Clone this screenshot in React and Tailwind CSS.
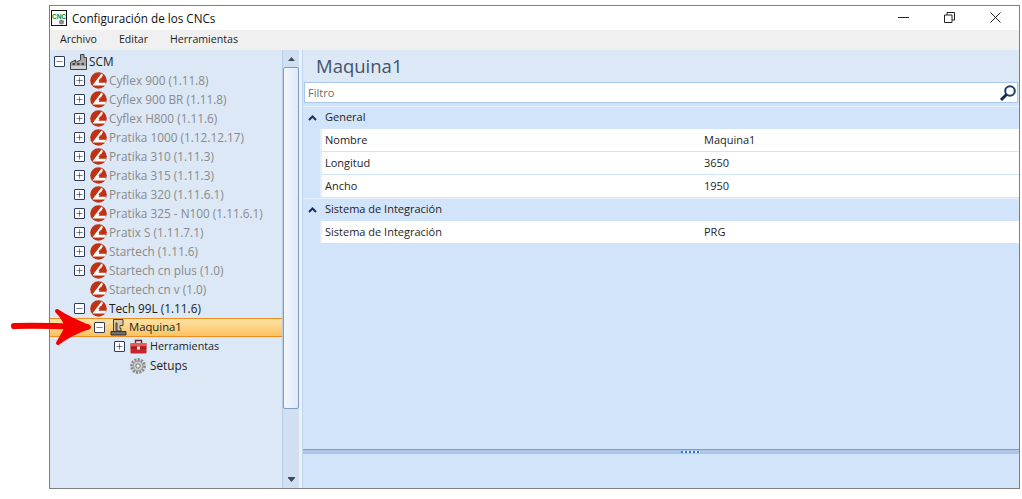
import { Minus, Plus } from "lucide-react";

const machines = [
  { name: "Cyflex 900 (1.11.8)" },
  { name: "Cyflex 900 BR (1.11.8)" },
  { name: "Cyflex H800 (1.11.6)" },
  { name: "Pratika 1000 (1.12.12.17)" },
  { name: "Pratika 310 (1.11.3)" },
  { name: "Pratika 315 (1.11.3)" },
  { name: "Pratika 320 (1.11.6.1)" },
  { name: "Pratika 325 - N100 (1.11.6.1)" },
  { name: "Pratix S (1.11.7.1)" },
  { name: "Startech (1.11.6)" },
  { name: "Startech cn plus (1.0)" },
  { name: "Startech cn v (1.0)", noToggle: true },
];

const Toggle = ({ open }) => (
  <span className="w-[11px] h-[11px] shrink-0 border border-[#2f3d5c] bg-white flex items-center justify-center rounded-[1px]">
    {open ? <Minus size={9} strokeWidth={1.6} color="#1f2a44" /> : <Plus size={9} strokeWidth={1.6} color="#1f2a44" />}
  </span>
);

const BrandIcon = () => (
  <svg width="17" height="17" viewBox="0 0 17 17" className="shrink-0">
    <circle cx="8.5" cy="8.5" r="8.3" fill="#bf3214" />
    <path d="M11.5 1.500 L3.500 12 L2.500 13.500 L15.500 13.500 L15.800 10.800 L8.500 10.800 L13 3 Z" fill="#fff" />
    <path d="M8.500 9 L10.500 5.500 L11 9 Z" fill="#bf3214" />
  </svg>
);

const FactoryIcon = () => (
  <svg width="17" height="16" viewBox="0 0 17 16" className="shrink-0">
    <path d="M.5 15.500V8.500l5-2.500v2.500l5-2.500V.5h3.500v3h2.500v12z" fill="#a8a8a8" stroke="#3f3f3f" />
    <path d="M1 15h15v-3H1z" fill="#d0d0d0" />
    <path d="M2.500 10h2.500M7 10h2.500M11.500 10h2.500" stroke="#222" strokeWidth="1.500" />
  </svg>
);

const MachineIcon = () => (
  <svg width="17" height="17" viewBox="0 0 17 17" className="shrink-0">
    <path d="M3.500.5h9.500v6h-3v3h1v2.500H7V4H6v8.500H3.500z" fill="#d9c9a3" stroke="#3f3f3f" />
    <path d="M1 16h15v-3.500H1z" fill="#6e6e6e" stroke="#333" />
  </svg>
);

const ToolboxIcon = () => (
  <svg width="17" height="15" viewBox="0 0 17 15" className="shrink-0">
    <path d="M5.500 4V1.500h6V4" fill="none" stroke="#7a2020" strokeWidth="1.400" />
    <rect x="0.500" y="4" width="16" height="10.500" rx="1" fill="#c8242c" />
    <rect x="0.500" y="4" width="16" height="3" fill="#e85a5a" />
    <rect x="0.500" y="8.500" width="16" height="1" fill="#8c1a20" />
    <rect x="7" y="7.500" width="3" height="3" fill="#eee" />
  </svg>
);

const GearIcon = () => (
  <svg width="16" height="16" viewBox="0 0 16 16" className="shrink-0">
    <circle cx="8" cy="8" r="6.600" fill="none" stroke="#8b8b8b" strokeWidth="2.600" strokeDasharray="2.200 1.200" />
    <circle cx="8" cy="8" r="5" fill="#cfcfcf" stroke="#8b8b8b" />
    <circle cx="8" cy="8" r="2.200" fill="#eee" stroke="#777" />
  </svg>
);

const AppIcon = () => (
  <svg width="16" height="16" viewBox="0 0 16 16" className="shrink-0">
    <rect x="0.500" y="0.500" width="15" height="15" fill="#fff" stroke="#111" />
    <text x="8" y="8.500" textAnchor="middle" fontSize="6.500" fontWeight="700" fill="#0a8a2a" fontFamily="Liberation Sans, sans-serif">CNC</text>
    <circle cx="10.500" cy="12" r="2.500" fill="#8a8a8a" />
  </svg>
);

const Row = ({ indent, children, selected }) => (
  <div
    className={`h-[19px] flex items-center whitespace-nowrap ${indent} ${
      selected ? "bg-gradient-to-b from-[#fee3a5] to-[#fbc25e] border-y border-[#f08c1e]" : ""
    }`}
  >
    {children}
  </div>
);

const Section = ({ title, rows, className }) => (
  <div className={className}>
    <div className="h-[22px] flex items-center bg-[#d2e4fa] border-t border-[#e8f1fd]">
      <svg width="9" height="6" viewBox="0 0 9 6" className="ml-[5px] mr-[8px]">
        <path d="M1 5l3.500-3.500L8 5" fill="none" stroke="#16305f" strokeWidth="2" />
      </svg>
      <span>{title}</span>
    </div>
    <div className="pl-[17px]">
      {rows.map(([label, value]) => (
        <div key={label} className="h-[23px] flex items-center bg-white border-t border-[#d2e4fa] border-l-2 border-l-[#e4eefb]">
          <span className="w-[382px] pl-[3px] shrink-0">{label}</span>
          <span>{value}</span>
        </div>
      ))}
    </div>
  </div>
);

export default function App() {
  return (
    <div className="relative w-[1022px] h-[499px] bg-white text-[11.800px] text-[#1e1e1e] font-['Open_Sans',sans-serif] pt-[5px] pl-[49px] overflow-hidden">
      <div className="w-[971px] h-[484px] border border-[#7f7f7f] flex flex-col">
        {/* Title bar */}
        <div className="h-[24px] flex items-center bg-white pl-[1px]">
          <AppIcon />
          <span className="ml-[5px] mt-[2px] text-[11.700px] text-[#111]">Configuración de los CNCs</span>
          <div className="ml-auto mb-[2px] flex items-center gap-[35px] pr-[18px]">
            <svg width="11" height="11" viewBox="0 0 11 11"><path d="M0 5.500h11" stroke="#222" /></svg>
            <svg width="11" height="11" viewBox="0 0 11 11"><path d="M.5 3h7.500v7.500H.5zM3 3V.5h7.500V8H8" fill="none" stroke="#222" /></svg>
            <svg width="11" height="11" viewBox="0 0 11 11"><path d="M.5.5l10 10M10.500.5l-10 10" stroke="#222" /></svg>
          </div>
        </div>

        {/* Menu */}
        <div className="h-[20px] bg-[#f0f0f0] flex items-center gap-[22px] pl-[10px] text-[10.600px]">
          <span>Archivo</span>
          <span>Editar</span>
          <span>Herramientas</span>
        </div>

        <div className="flex-1 flex min-h-0 bg-[#f0f0f0]">
          {/* Tree */}
          <div className="w-[232px] bg-[#dce8f6] pt-[2px]">
            <Row indent="pl-[4px]">
              <Toggle open />
              <span className="ml-[5px]"><FactoryIcon /></span>
              <span className="ml-[2px]">SCM</span>
            </Row>
            {machines.map((m) => (
              <Row key={m.name} indent="pl-[24px]">
                {m.noToggle ? <span className="w-[11px]" /> : <Toggle />}
                <span className="ml-[5px]"><BrandIcon /></span>
                <span className="ml-[2px] text-[#8a8a8a]">{m.name}</span>
              </Row>
            ))}
            <Row indent="pl-[24px]">
              <Toggle open />
              <span className="ml-[5px]"><BrandIcon /></span>
              <span className="ml-[2px]">Tech 99L (1.11.6)</span>
            </Row>
            <Row indent="pl-[44px]" selected>
              <Toggle open />
              <span className="ml-[5px]"><MachineIcon /></span>
              <span className="ml-[2px] text-[11.300px]">Maquina1</span>
            </Row>
            <Row indent="pl-[64px]">
              <Toggle />
              <span className="ml-[5px]"><ToolboxIcon /></span>
              <span className="ml-[3px] text-[10.800px]">Herramientas</span>
            </Row>
            <Row indent="pl-[80px]">
              <GearIcon />
              <span className="ml-[4px]">Setups</span>
            </Row>
          </div>

          {/* Scrollbar */}
          <div className="w-[17px] bg-[#d0dff3] border-l border-[#b9cce6] flex flex-col items-center">
            <div className="h-[17px] flex items-center justify-center">
              <svg width="7" height="4" viewBox="0 0 7 4"><path d="M3.500 0L7 4H0z" fill="#3f4a5e" /></svg>
            </div>
            <div className="w-[16px] h-[342px] border border-[#7f9cc7] rounded-[2px] bg-gradient-to-r from-[#f2f7fd] to-[#dfe9f7]" />
            <div className="mt-auto h-[17px] flex items-center justify-center">
              <svg width="7" height="5" viewBox="0 0 7 5"><path d="M0 0h7v1L3.500 5 0 1z" fill="#3f4a5e" /></svg>
            </div>
          </div>

          {/* Detail pane */}
          <div className="ml-[3px] flex-1 min-w-0 flex flex-col bg-[#d2e4fa] border-l border-[#bcd6f7] text-[11px]">
            <div className="h-[32px] bg-[#dce8f6] flex items-center pl-[13px] text-[18.500px] text-[#44546a]">Maquina1</div>
            <div className="h-[21px] mx-[1px] bg-white border border-[#a9c8ee] flex items-center pl-[3px] text-[#6d6d6d]">
              <span className="pt-[1px]">Filtro</span>
              <svg width="18" height="18" viewBox="0 0 18 18" className="ml-auto">
                <circle cx="11" cy="7" r="4.800" fill="none" stroke="#1c3c66" strokeWidth="2" />
                <path d="M7.500 10.500L2 16" stroke="#14294a" strokeWidth="3" />
              </svg>
            </div>
            <div className="mt-[3px]">
              <Section title="General" rows={[["Nombre", "Maquina1"], ["Longitud", "3650"], ["Ancho", "1950"]]} />
              <Section className="mt-[1px]" title="Sistema de Integración" rows={[["Sistema de Integración", "PRG"]]} />
            </div>
            <div className="mt-auto mb-[34px] h-[5px] bg-[#adc6e8] border-t border-[#7a9cc8] flex items-center pl-[378px]">
              <span className="w-[19px] h-[2px] bg-[repeating-linear-gradient(90deg,#2f73d0_0,#2f73d0_2px,#e8f1fd_2px,#e8f1fd_4px)]" />
            </div>
          </div>
        </div>
      </div>

      {/* Annotation arrow */}
      <svg width="90" height="44" viewBox="0 0 90 44" className="absolute left-[5px] top-[305px]">
        <path d="M9 21 C30 20 55 21 82 22" fill="none" stroke="#f40000" strokeWidth="6" strokeLinecap="round" />
        <path d="M52 6 C62 13 74 18 84 22 C72 26 62 31 53 38 C58 30 60 26 62 22 C60 16 57 11 52 6 Z" fill="#f40000" stroke="#f40000" strokeWidth="4" strokeLinejoin="round" />
      </svg>
    </div>
  );
}
